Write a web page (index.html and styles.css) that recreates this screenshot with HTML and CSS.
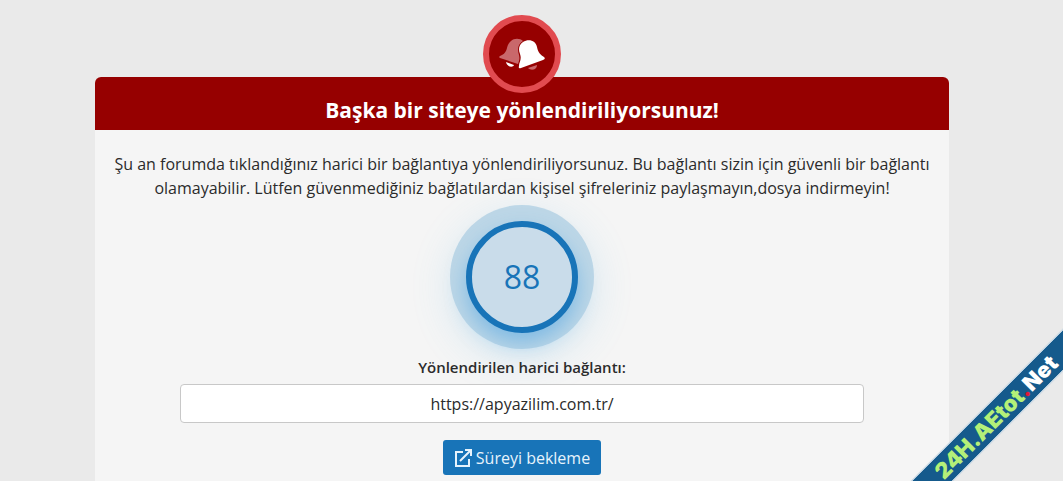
FILE: index.html
```html
<!DOCTYPE html>
<html lang="tr">
<head>
<meta charset="utf-8">
<meta name="viewport" content="width=device-width, initial-scale=1">
<title>Yönlendirme</title>
<link rel="stylesheet" href="styles.css">
</head>
<body>
<main class="page">
  <section class="card">
    <header class="card-header">
      <span class="badge">
        <svg class="bells" viewBox="0 0 46 34" aria-hidden="true">
          <path class="bell-dim" d="M12 4C15 1 21 1 24 4C19 7 18 12 20 18C21 22 20 24 19 27L1 21C-1 20 1 19 3 18C10 14 6 9 12 4Z"/>
          <path class="bell" d="M7 25L15 28C14 31 8 30 7 25Z"/>
          <path class="bell-dim" d="M29 31L38 28C38 33 32 34 29 31Z"/>
          <path class="bell" d="M24 5C30 1 37 4 38 10C39 16 42 18 45 20Q47 22 44 23L22 31Q19 32 20 29C20 25 23 23 21 17C19 12 20 8 24 5Z"/>
        </svg>
      </span>
      <h1 class="title">Başka bir siteye yönlendiriliyorsunuz!</h1>
    </header>
    <div class="card-body">
      <p class="message">Şu an forumda tıklandığınız harici bir bağlantıya yönlendiriliyorsunuz. Bu bağlantı sizin için güvenli bir bağlantı olamayabilir. Lütfen güvenmediğiniz bağlatılardan kişisel şifreleriniz paylaşmayın,dosya indirmeyin!</p>
      <div class="timer"><div class="timer-ring">88</div></div>
      <label class="link-label" for="target">Yönlendirilen harici bağlantı:</label>
      <input class="link-field" id="target" type="text" value="https://apyazilim.com.tr/" readonly>
      <button class="skip" type="button">
        <svg class="skip-icon" viewBox="0 0 18 18" aria-hidden="true"><path d="M9 3H2V17H15V10M6 12L16 2M11 1H17V7"/></svg>
        Süreyi bekleme
      </button>
    </div>
  </section>
</main>
<div class="corner"><div class="ribbon"><span class="ribbon-name">24H.AEtot</span><span class="ribbon-dot">.</span>Net</div></div>
</body>
</html>
```
FILE: styles.css
```css
* { box-sizing: border-box; }
body {
  margin: 0;
  background: #eaeaea;
  color: #2b2b2b;
  font: 16px/24px "Open Sans", "Noto Sans", sans-serif;
}
.page {
  display: flex;
  justify-content: center;
  min-height: 100vh;
  padding: 77px 36px 0 17px;
}
.card {
  display: flex;
  flex-direction: column;
  width: 100%;
  max-width: 854px;
  background: #f5f5f5;
  border-radius: 6px 6px 0 0;
}
.card-header {
  position: relative;
  padding: 19px 16px 6px;
  background: #960000;
  border-radius: 6px 6px 0 0;
  text-align: center;
}
.badge {
  position: absolute;
  top: -62px;
  left: 50%;
  display: flex;
  align-items: center;
  justify-content: center;
  width: 78px;
  height: 78px;
  background: #960000;
  border: 6px solid #e14b50;
  border-radius: 50%;
  transform: translateX(-50%);
}
.bells { width: 46px; height: 34px; }
.bell { fill: #fff; }
.bell-dim { fill: #c9686b; }
.title {
  margin: 0;
  color: #fff;
  font-size: 21px;
  line-height: 28px;
  font-weight: 700;
}
.card-body {
  display: flex;
  flex-direction: column;
  align-items: center;
  padding: 22px 8px 5px;
}
.message {
  margin: 0 0 5px;
  text-align: center;
}
.timer {
  display: flex;
  align-items: center;
  justify-content: center;
  width: 144px;
  height: 144px;
  margin-bottom: 6px;
  background: #bdd7e7;
  border-radius: 50%;
  box-shadow: 0 10px 40px rgba(80, 175, 235, 0.18);
}
.timer-ring {
  display: flex;
  align-items: center;
  justify-content: center;
  width: 112px;
  height: 112px;
  background: #c9dcea;
  border: 6px solid #1874b8;
  border-radius: 50%;
  box-shadow: 0 10px 20px rgba(70, 160, 225, 0.5);
  color: #1874b8;
  font-size: 32px;
}
.link-label {
  margin-bottom: 5px;
  font-size: 15px;
  font-weight: 600;
}
.link-field {
  width: 684px;
  max-width: 100%;
  height: 39px;
  margin-bottom: 17px;
  padding: 0 12px;
  background: #fff;
  border: 1px solid #c8c8c8;
  border-radius: 4px;
  color: #2b2b2b;
  font: inherit;
  text-align: center;
}
.skip {
  display: flex;
  align-items: center;
  gap: 4px;
  height: 35px;
  padding: 0 11px;
  background: #1874b8;
  border: 0;
  border-radius: 3px;
  color: #e6f3fc;
  font: inherit;
}
.skip-icon {
  width: 18px;
  height: 18px;
  fill: none;
  stroke: currentColor;
  stroke-width: 2;
}
.corner {
  position: fixed;
  right: 0;
  bottom: 0;
  width: 160px;
  height: 160px;
  overflow: hidden;
  pointer-events: none;
}
.ribbon {
  position: absolute;
  right: -53px;
  bottom: 49px;
  width: 240px;
  height: 30px;
  background: #155a8c;
  border: 1px solid #fff;
  color: #fff;
  font: 900 22px/28px Inter, sans-serif;
  text-align: center;
  transform: rotate(-45deg);
}
.ribbon-name { color: #b4f078; }
.ribbon-dot { color: #e01838; }
```
